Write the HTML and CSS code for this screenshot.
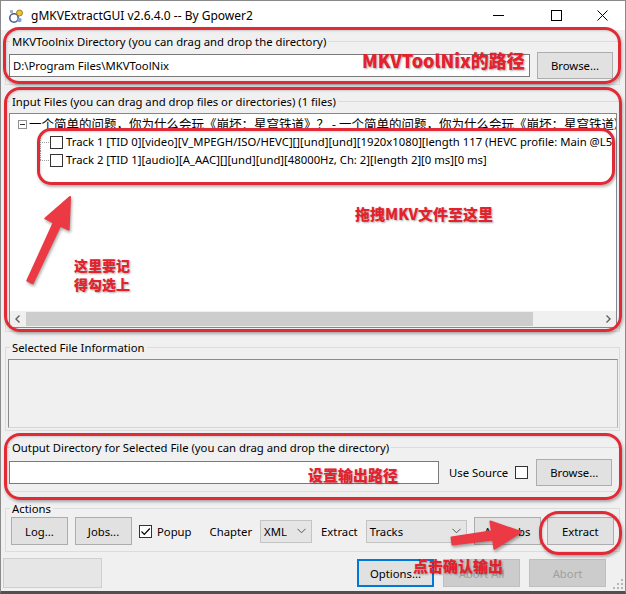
FILE: index.html
```html
<!DOCTYPE html>
<html>
<head>
<meta charset="utf-8">
<title>gMKVExtractGUI</title>
<link rel="stylesheet" href="styles.css">
</head>
<body>
<div class="window">
  <div class="titlebar">
    <svg class="appicon" width="16" height="16" viewBox="0 0 16 16">
      <circle cx="6" cy="10" r="4.2" fill="none" stroke="#4a5a8a" stroke-width="1.6"/>
      <circle cx="11.5" cy="5" r="3" fill="#f2c230" stroke="#8a6a10" stroke-width="0.8"/>
      <circle cx="11.5" cy="12" r="2.2" fill="#7fa6d8"/>
      <rect x="2" y="2" width="3" height="3" fill="#b0b0c0"/>
    </svg>
    <span class="title">gMKVExtractGUI v2.6.4.0 -- By Gpower2</span>
    <div class="caption">
      <span class="cap cap-min"><svg width="11" height="11" viewBox="0 0 11 11"><line x1="0" y1="5.5" x2="11" y2="5.5" stroke="#000" stroke-width="1"/></svg></span>
      <span class="cap cap-max"><svg width="11" height="11" viewBox="0 0 11 11"><rect x="0.5" y="0.5" width="10" height="10" fill="none" stroke="#000" stroke-width="1"/></svg></span>
      <span class="cap cap-close"><svg width="11" height="11" viewBox="0 0 11 11"><path d="M0.5 0.5 L10.5 10.5 M10.5 0.5 L0.5 10.5" stroke="#000" stroke-width="1"/></svg></span>
    </div>
  </div>

  <div class="client">
    <fieldset class="group g-mkv">
      <legend>MKVToolnix Directory (you can drag and drop the directory)</legend>
      <div class="row">
        <div class="textbox grow">D:\Program Files\MKVToolNix</div>
        <div class="btn btn-browse">Browse...</div>
      </div>
    </fieldset>

    <fieldset class="group g-input">
      <legend>Input Files (you can drag and drop files or directories) (1 files)</legend>
      <div class="tree">
        <div class="tree-body">
          <div class="node root">
            <span class="expander"><span class="minus"></span></span>
            <span class="root-line"></span>
            <span class="node-text cjk">一个简单的问题，你为什么会玩《崩坏：星穹铁道》？ - 一个简单的问题，你为什么会玩《崩坏：星穹铁道》？</span>
          </div>
          <div class="node track first">
            <span class="branch"></span>
            <span class="check"></span>
            <span class="node-text">Track 1 [TID 0][video][V_MPEGH/ISO/HEVC][][und][und][1920x1080][length 117 (HEVC profile: Main @L5.1)]</span>
          </div>
          <div class="node track last">
            <span class="branch"></span>
            <span class="check"></span>
            <span class="node-text">Track 2 [TID 1][audio][A_AAC][][und][und][48000Hz, Ch: 2][length 2][0 ms][0 ms]</span>
          </div>
        </div>
        <div class="hscroll">
          <span class="sb-arrow"><svg width="8" height="8" viewBox="0 0 8 8"><path d="M5.5 0.5 L2 4 L5.5 7.5" fill="none" stroke="#606060" stroke-width="1.4"/></svg></span>
          <span class="sb-track"><span class="sb-thumb"></span></span>
          <span class="sb-arrow"><svg width="8" height="8" viewBox="0 0 8 8"><path d="M2.5 0.5 L6 4 L2.5 7.5" fill="none" stroke="#606060" stroke-width="1.4"/></svg></span>
        </div>
      </div>
    </fieldset>

    <fieldset class="group g-info">
      <legend>Selected File Information</legend>
      <div class="infobox"></div>
    </fieldset>

    <fieldset class="group g-output">
      <legend>Output Directory for Selected File (you can drag and drop the directory)</legend>
      <div class="row">
        <div class="textbox out-box"></div>
        <span class="label use-source">Use Source</span>
        <span class="check use-check"></span>
        <div class="btn btn-browse">Browse...</div>
      </div>
    </fieldset>

    <fieldset class="group g-actions">
      <legend>Actions</legend>
      <div class="row actions-row">
        <div class="btn btn-log">Log...</div>
        <div class="btn btn-jobs">Jobs...</div>
        <span class="check checked popup-check"><svg width="11" height="11" viewBox="0 0 11 11"><path d="M1.5 5.5 L4.3 8.3 L9.8 2.5" fill="none" stroke="#000" stroke-width="1.2"/></svg></span>
        <span class="label popup-label">Popup</span>
        <span class="label chapter-label">Chapter</span>
        <div class="combo combo-xml"><span>XML</span><svg width="9" height="6" viewBox="0 0 9 6"><path d="M0.5 0.8 L4.5 4.8 L8.5 0.8" fill="none" stroke="#555" stroke-width="1"/></svg></div>
        <span class="label extract-label">Extract</span>
        <div class="combo combo-tracks"><span>Tracks</span><svg width="9" height="6" viewBox="0 0 9 6"><path d="M0.5 0.8 L4.5 4.8 L8.5 0.8" fill="none" stroke="#555" stroke-width="1"/></svg></div>
        <div class="btn btn-addjobs">Add Jobs</div>
        <div class="btn btn-extract">Extract</div>
      </div>
    </fieldset>

    <div class="bottom">
      <div class="status"></div>
      <div class="btn btn-options">Options...</div>
      <div class="btn disabled btn-abortall">Abort All</div>
      <div class="btn disabled btn-abort">Abort</div>
      <svg class="grip" width="12" height="12" viewBox="0 0 12 12">
        <rect x="9" y="1" width="2" height="2" fill="#b8b8b8"/>
        <rect x="5" y="5" width="2" height="2" fill="#b8b8b8"/>
        <rect x="9" y="5" width="2" height="2" fill="#b8b8b8"/>
        <rect x="1" y="9" width="2" height="2" fill="#b8b8b8"/>
        <rect x="5" y="9" width="2" height="2" fill="#b8b8b8"/>
        <rect x="9" y="9" width="2" height="2" fill="#b8b8b8"/>
      </svg>
    </div>
  </div>

  <div class="frame frame-mkv"></div>
  <div class="frame frame-input"></div>
  <div class="frame frame-tracks"></div>
  <div class="frame frame-output"></div>
  <div class="frame frame-extract"></div>

  <svg class="arrows" width="626" height="594" viewBox="0 0 626 594">
    <polygon points="70,197 68.7,229.6 60.2,225.5 32.7,283.3 27.3,280.7 53.8,222.5 45.3,218.4" fill="#ec3a44" stroke="#ec3a44" stroke-width="2" stroke-linejoin="round"/>
    <polygon points="521,532 494.4,548.6 493.1,539.5 452.5,544.5 451.5,537.5 491.9,531.3 490.4,521.5" fill="#ec3a44" stroke="#ec3a44" stroke-width="2" stroke-linejoin="round"/>
  </svg>

  <div class="note note-mkv">MKVToolNix的路径</div>
  <div class="note note-drag">拖拽MKV文件至这里</div>
  <div class="note note-check">这里要记<br>得勾选上</div>
  <div class="note note-output">设置输出路径</div>
  <div class="note note-extract">点击确认输出</div>
</div>
</body>
</html>
```

FILE: styles.css
```css
* { box-sizing: border-box; }
html, body { margin: 0; padding: 0; }
body {
  width: 626px;
  height: 594px;
  overflow: hidden;
  background: #f0f0f0;
  font-family: "Noto Sans", "Noto Sans CJK SC", sans-serif;
  font-size: 11.3px;
  color: #000;
}
.cjk { font-family: "Noto Sans CJK SC", "Noto Sans", sans-serif; }

.window {
  position: relative;
  width: 626px;
  height: 594px;
  border: 1px solid #8a8a8a;
  border-bottom: 3px solid #505050;
  background: #f0f0f0;
  display: flex;
  flex-direction: column;
  overflow: hidden;
}

/* title bar */
.titlebar {
  height: 29px;
  flex-shrink: 0;
  background: #fff;
  display: flex;
  align-items: center;
}
.appicon { margin-left: 7px; margin-right: 7px; }
.title { font-size: 12px; line-height: 16px; }
.caption { margin-left: auto; display: flex; height: 29px; }
.cap { width: 46px; height: 29px; display: flex; align-items: center; justify-content: center; }
.cap-min { margin-right: 12px; }

/* client area */
.client {
  flex: 1;
  display: flex;
  flex-direction: column;
  padding-top: 4px;
}
.group {
  margin: 0 5px 0 4px;
  border: 1px solid #dcdcdc;
  padding: 0 6px 5px 3px;
  min-width: 0;
}
.group legend {
  padding: 0 2px;
  margin-left: 1px;
  line-height: 15px;
  font-size: 11.3px;
}
.row { display: flex; align-items: center; }
.grow { flex: 1; }
.label { white-space: nowrap; flex-shrink: 0; }

.textbox {
  height: 23px;
  background: #fff;
  border: 1px solid #7a7a7a;
  padding: 0 3px;
  line-height: 21px;
  white-space: nowrap;
  overflow: hidden;
}
.btn {
  height: 27px;
  background: #e1e1e1;
  border: 1px solid #adadad;
  display: flex;
  align-items: center;
  justify-content: center;
  white-space: nowrap;
  flex-shrink: 0;
}
.btn-browse { width: 76px; margin-left: 7px; }

.g-mkv .row { margin-top: 3px; }
.g-mkv { padding-bottom: 5px; }

/* input files */
.g-input { margin-top: 9px; padding: 4px 2px 3px 3px; }
.tree {
  height: 215px;
  background: #fff;
  border: 1px solid #828790;
  display: flex;
  flex-direction: column;
}
.tree-body {
  flex: 1;
  overflow: hidden;
  padding-top: 1px;
}
.node {
  height: 18px;
  display: flex;
  align-items: center;
  white-space: nowrap;
}
.root { padding-left: 8px; }
.expander {
  width: 9px; height: 9px;
  border: 1px solid #919191;
  background: #fff;
  position: relative;
  flex-shrink: 0;
}
.minus {
  position: absolute;
  left: 1px; top: 3px;
  width: 5px; height: 1px;
  background: #333;
}
.root-line {
  width: 4px;
  border-top: 1px dotted #a0a0a0;
  margin: 0 1px;
}
.node-text { line-height: 18px; }
.root .node-text { font-size: 12.5px; }
.track { padding-left: 30px; }
.branch {
  width: 10px;
  height: 18px;
  position: relative;
  flex-shrink: 0;
}
.branch::before {
  content: "";
  position: absolute;
  left: 0; top: 9px;
  width: 9px;
  border-top: 1px dotted #a0a0a0;
}
.branch::after {
  content: "";
  position: absolute;
  left: 0;
  border-left: 1px dotted #a0a0a0;
}
.first .branch::after { top: 0; height: 18px; }
.last .branch::after { top: 0; height: 9px; }
.check {
  width: 13px; height: 13px;
  border: 1px solid #333;
  background: #fff;
  flex-shrink: 0;
  display: flex;
  align-items: center;
  justify-content: center;
}
.track .check { margin-right: 3px; }

.hscroll {
  height: 16px;
  display: flex;
  align-items: stretch;
  background: #f0f0f0;
}
.sb-arrow {
  width: 16px;
  display: flex;
  align-items: center;
  justify-content: center;
}
.sb-track { flex: 1; display: flex; align-items: stretch; padding: 1px 0; }
.sb-thumb { width: 507px; background: #cdcdcd; }

/* selected file info */
.g-info { margin-top: 8px; padding: 4px 1px 2px 3px; }
.infobox {
  height: 69px;
  margin-left: -1px;
  background: #f0f0f0;
  border: 1px solid #8c8c8c;
  border-bottom-color: #d6d6d6;
  border-right-color: #b4b4b4;
}

/* output */
.g-output { margin-top: 9px; padding-top: 4px; }
.out-box { width: 430px; flex-shrink: 0; }
.use-source { margin-left: 10px; }
.use-check { margin-left: 7px; }
.g-output .btn-browse { margin-left: 8px; }

/* actions */
.g-actions { margin-top: 9px; padding: 1px 6px 6px 3px; }
.actions-row .btn { height: 28px; }
.btn-log { width: 57px; margin-left: 2px; }
.btn-jobs { width: 57px; margin-left: 7px; }
.popup-check { margin-left: 7px; }
.popup-label { margin-left: 5px; }
.chapter-label { margin-left: 18px; }
.combo {
  height: 23px;
  background: #e5e5e5;
  border: 1px solid #c4c4c4;
  display: flex;
  align-items: center;
  justify-content: space-between;
  padding: 0 5px 0 3px;
  flex-shrink: 0;
}
.combo-xml { width: 52px; margin-left: 8px; }
.extract-label { margin-left: 9px; }
.combo-tracks { width: 101px; margin-left: 8px; }
.btn-addjobs { width: 67px; margin-left: 7px; }
.btn-extract { width: 67px; margin-left: 6px; }

/* bottom */
.bottom {
  margin-top: 6px;
  height: 30px;
  display: flex;
  align-items: center;
  position: relative;
}
.status {
  width: 99px;
  height: 30px;
  margin-left: 2px;
  background: #e6e6e6;
  border: 1px solid #cfcfcf;
}
.btn-options {
  margin-left: auto;
  width: 77px;
  height: 28px;
  border: 2px solid #0078d7;
}
.btn-abortall { width: 77px; height: 28px; margin-left: 9px; }
.btn-abort { width: 77px; height: 28px; margin-left: 9px; margin-right: 19px; }
.btn.disabled { background: #cccccc; border-color: #bfbfbf; color: #a0a0a0; }
.grip { position: absolute; right: 1px; bottom: -2px; }

/* annotations */
.frame {
  position: absolute;
  border: 3px solid #e02a36;
  border-radius: 16px;
  box-shadow: 1px 2px 3px rgba(0,0,0,0.3), inset 1px 1px 2px rgba(0,0,0,0.15);
  pointer-events: none;
}
.frame-mkv { left: 2px; top: 26px; width: 618px; height: 57px; }
.frame-input { left: 3px; top: 86px; width: 618px; height: 245px; }
.frame-tracks { left: 36px; top: 127px; width: 578px; height: 57px; border-radius: 14px; }
.frame-output { left: 3px; top: 432px; width: 618px; height: 67px; }
.frame-extract { left: 538px; top: 510px; width: 83px; height: 44px; border-radius: 20px; }

.arrows {
  position: absolute;
  left: -1px; top: -1px;
  pointer-events: none;
  filter: drop-shadow(1px 2px 1.5px rgba(0,0,0,0.35));
}

.note {
  position: absolute;
  font-family: "Noto Sans CJK SC", "Noto Sans", sans-serif;
  font-weight: 900;
  color: #e4212d;
  text-shadow: 1px 1px 2px rgba(0,0,0,0.35);
  white-space: nowrap;
  pointer-events: none;
}
.note-mkv { left: 361px; top: 48px; font-size: 18px; line-height: 22px; }
.note-drag { left: 354px; top: 203px; font-size: 15px; line-height: 20px; }
.note-check { left: 73px; top: 255px; font-size: 14px; line-height: 19px; }
.note-output { left: 307px; top: 464px; font-size: 15px; line-height: 20px; }
.note-extract { left: 412px; top: 555px; font-size: 15px; line-height: 20px; }
```
